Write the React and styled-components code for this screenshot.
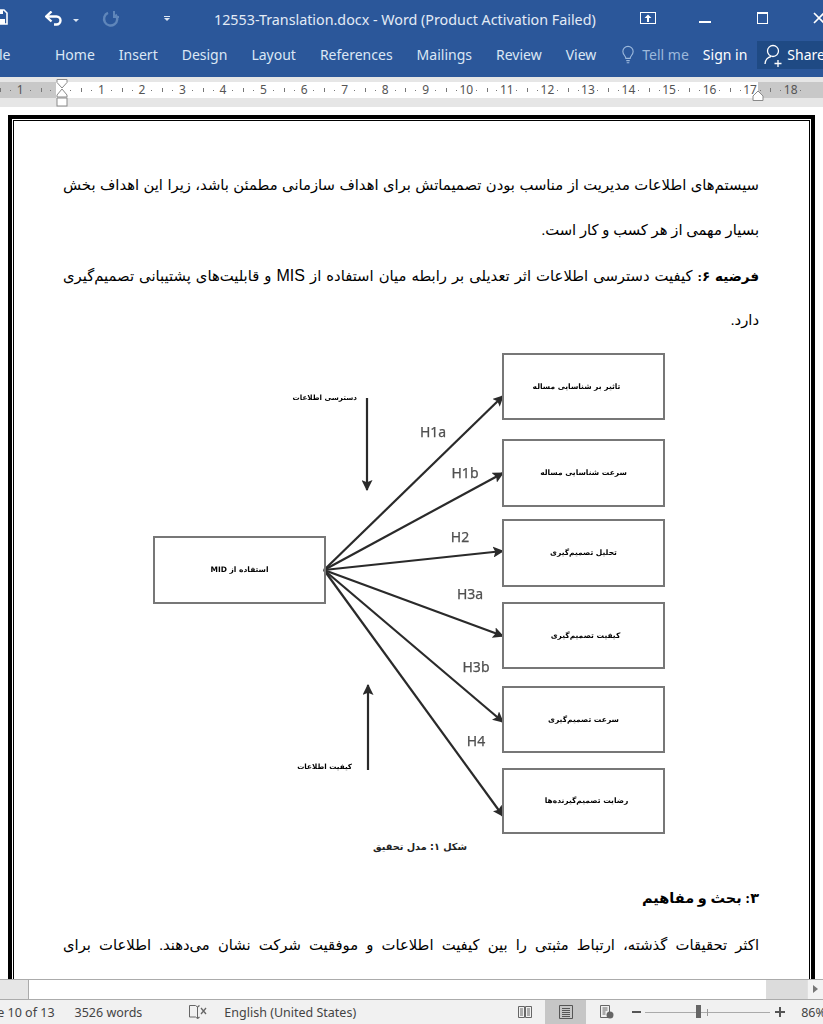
import React from 'react';
import styled, { createGlobalStyle } from 'styled-components';

const GlobalStyle = createGlobalStyle`
  html, body {
    margin: 0;
    padding: 0;
    height: 100%;
    background: #fff;
  }
  body {
    font-family: "Noto Sans", "Open Sans", sans-serif;
  }
`

const tabs = ['Home', 'Insert', 'Design', 'Layout', 'References', 'Mailings', 'Review', 'View'];
const rulerMarks = [1, '', 1, 2, 3, 4, 5, 6, 7, 8, 9, 10, 11, 12, 13, 14, 15, 16, 17, 18];

const targets = [
  { label: 'تاثیر بر شناسایی مساله', y: 10, h: 67, shift: -7, end: [353, 53], hyp: 'H1a', hx: 283, hy: 89 },
  { label: 'سرعت شناسایی مساله', y: 96, h: 68, shift: 0, end: [353, 130], hyp: 'H1b', hx: 315, hy: 130 },
  { label: 'تحلیل تصمیم‌گیری', y: 176, h: 68, shift: 0, end: [353, 208], hyp: 'H2', hx: 310, hy: 194 },
  { label: 'کیفیت تصمیم‌گیری', y: 259, h: 67, shift: 2, end: [353, 293], hyp: 'H3a', hx: 320, hy: 251 },
  { label: 'سرعت تصمیم‌گیری', y: 343, h: 67, shift: 0, end: [353, 379], hyp: 'H3b', hx: 326, hy: 324 },
  { label: 'رضایت تصمیم‌گیرنده‌ها', y: 425, h: 66, shift: 3, end: [353, 473], hyp: 'H4', hx: 326, hy: 398 },
];

function App() {
  return (
    <Screen>
      <GlobalStyle />
      <TitleBar>
        <SaveIcon viewBox="0 0 8 16">
          <path d="M-8 1h12l3 3v11H-8z" fill="none" stroke="#fff" strokeWidth="1.600" />
          <path d="M0 1h3v4H0zM0 10h5v5H0z" fill="#fff" />
        </SaveIcon>
        <UndoIcon viewBox="0 0 18 16">
          <path d="M2 5.500h9.500a4 4 0 0 1 0 8H9" fill="none" stroke="#fff" strokeWidth="2.400" />
          <path d="M6.500 0.500 1.200 5.500l5.300 5" fill="none" stroke="#fff" strokeWidth="2.400" />
        </UndoIcon>
        <Caret $left={10} />
        <RedoIcon viewBox="0 0 18 18">
          <path d="M13.500 4.500a6.600 6.600 0 1 1-7.500-1.600" fill="none" stroke="#5f86ba" strokeWidth="2.400" />
          <path d="M12 1v6h5" fill="none" stroke="#5f86ba" strokeWidth="2" />
        </RedoIcon>
        <Customize>
          <span />
          <Caret $left={0} />
        </Customize>
        <DocTitle>12553-Translation.docx - Word (Product Activation Failed)</DocTitle>
        <RestoreIcon viewBox="0 0 16 12">
          <rect x="0.500" y="0.500" width="15" height="11" fill="none" stroke="#fff" />
          <path d="M8 2.500 4.500 6H7v4h2V6h2.500z" fill="#fff" />
        </RestoreIcon>
        <MinimizeIcon />
        <MaximizeIcon />
        <CloseIcon viewBox="0 0 12 12">
          <path d="M1 1l10 10M11 1 1 11" stroke="#fff" strokeWidth="1.600" />
        </CloseIcon>
      </TitleBar>

      <Ribbon>
        <FileTab>File</FileTab>
        <Tabs>
          {tabs.map(tab => <Tab key={tab}>{tab}</Tab>)}
        </Tabs>
        <BulbIcon viewBox="0 0 14 20">
          <path d="M4.500 14c0-3-3.500-4-3.500-8a6 6 0 0 1 12 0c0 4-3.500 5-3.500 8z" fill="none" stroke="#9db9dc" strokeWidth="1.300" />
          <path d="M5 16.500h4M5.500 19h3" stroke="#9db9dc" strokeWidth="1.300" />
        </BulbIcon>
        <TellMe>Tell me</TellMe>
        <SignIn>Sign in</SignIn>
        <ShareBox>
          <svg width="20" height="24" viewBox="0 0 20 24">
            <circle cx="9" cy="8" r="5.500" fill="none" stroke="#fff" strokeWidth="1.300" />
            <path d="M1 21c0-4 3-7 6-7.500M14 17v7M10.500 20.500h7" fill="none" stroke="#fff" strokeWidth="1.300" />
          </svg>
          <span>Share</span>
        </ShareBox>
      </Ribbon>

      <RulerBand>
        <Ruler>
          {rulerMarks.map((mark, i) => <RulerCell key={i}>{mark}</RulerCell>)}
          <IndentMarker viewBox="0 0 12 29">
            <path d="M1 .5h10v3L6 9 1 3.500zM6 10l5 6v2H1v-2z" fill="#fff" stroke="#8a8a8a" />
            <rect x="1" y="19" width="10" height="8" fill="#fff" stroke="#8a8a8a" />
          </IndentMarker>
          <RightMarker viewBox="0 0 12 11">
            <path d="M1 10.500V6l5-5 5 5v4.500z" fill="#fff" stroke="#8a8a8a" />
          </RightMarker>
        </Ruler>
      </RulerBand>

      <Workspace>
        <Page>
          <PageInner>
            <Line>سیستم‌های اطلاعات مدیریت از مناسب بودن تصمیماتش برای اهداف سازمانی مطمئن باشد، زیرا این اهداف بخش</Line>
            <Line $short>بسیار مهمی از هر کسب و کار است.</Line>
            <Line><Lead>فرضیه ۶:</Lead> کیفیت دسترسی اطلاعات اثر تعدیلی بر رابطه میان استفاده از <Latin>MIS</Latin> و قابلیت‌های پشتیبانی تصمیم‌گیری</Line>
            <Line $short>دارد.</Line>

            <Diagram>
              <Wires viewBox="0 0 520 495">
                <defs>
                  <marker id="head" markerWidth="5" markerHeight="5" refX="4.500" refY="2.500" orient="auto">
                    <path d="M0 0 5 2.500 0 5 1 2.500z" fill="#2a2a2a" />
                  </marker>
                </defs>
                {targets.map(t => (
                  <line key={t.hyp} x1="174" y1="227" x2={t.end[0]} y2={t.end[1]} stroke="#2a2a2a" strokeWidth="2.200" markerEnd="url(#head)" />
                ))}
                <line x1="217" y1="55" x2="217" y2="147" stroke="#2a2a2a" strokeWidth="2.200" markerEnd="url(#head)" />
                <line x1="218" y1="427" x2="218" y2="342" stroke="#2a2a2a" strokeWidth="2.200" markerEnd="url(#head)" />
              </Wires>
              <Node $x={3} $y={193} $w={173} $h={68}>
                <NodeLabel dir="rtl" $shift={0}>استفاده از MID</NodeLabel>
              </Node>
              {targets.map(t => (
                <Node key={t.label} $x={352} $y={t.y} $w={163} $h={t.h}>
                  <NodeLabel dir="rtl" $shift={t.shift}>{t.label}</NodeLabel>
                </Node>
              ))}
              {targets.map(t => (
                <Hypothesis key={t.hyp} $x={t.hx} $y={t.hy}>{t.hyp}</Hypothesis>
              ))}
              <SideLabel dir="rtl" $x={207} $y={55}>دسترسی اطلاعات</SideLabel>
              <SideLabel dir="rtl" $x={202} $y={424}>کیفیت اطلاعات</SideLabel>
            </Diagram>

            <Caption>شکل ۱: مدل تحقیق</Caption>
            <Heading>۳: بحث و مفاهیم</Heading>
            <Line>اکثر تحقیقات گذشته، ارتباط مثبتی را بین کیفیت اطلاعات و موفقیت شرکت نشان می‌دهند. اطلاعات برای</Line>
          </PageInner>
        </Page>
      </Workspace>

      <HScroll>
        <ScrollThumb />
        <ScrollTrack />
        <ScrollArrow />
      </HScroll>

      <StatusBar>
        <StatusText $left={-25}>Page 10 of 13</StatusText>
        <StatusText $left={20}>3526 words</StatusText>
        <ProofIcon viewBox="0 0 18 14">
          <path d="M.5.500h6l2 1.500v11.500l-2-1.500h-6z" fill="none" stroke="#666" />
          <path d="M8.500 2l2-1.500M8.500 13.500l2-1.500M12 3l5 6M17 3l-5 6" fill="none" stroke="#666" strokeWidth="1.300" />
        </ProofIcon>
        <StatusText $left={17}>English (United States)</StatusText>
        <StatusIcons>
          <ViewButton>
            <svg width="14" height="14" viewBox="0 0 14 14">
              <path d="M.5 1.500h6v11h-6zM7.500 1.500h6v11h-6zM2 4h3M2 6h3M2 8h3M2 10h3M9 4h3M9 6h3M9 8h3M9 10h3" fill="none" stroke="#666" />
            </svg>
          </ViewButton>
          <ViewButton $active>
            <svg width="14" height="14" viewBox="0 0 14 14">
              <path d="M.5.500h13v13H.5zM3 3.500h8M3 5.500h8M3 7.500h8M3 9.500h8M3 11.500h8" fill="none" stroke="#555" />
            </svg>
          </ViewButton>
          <ViewButton>
            <svg width="14" height="14" viewBox="0 0 14 14">
              <path d="M.5.500h9v12h-9zM2.500 3h5M2.500 5h5M2.500 7h3M2.500 9h3" fill="none" stroke="#666" />
              <circle cx="10" cy="10" r="3.500" fill="#666" />
            </svg>
          </ViewButton>
        </StatusIcons>
        <ZoomMinus />
        <ZoomSlider>
          <ZoomThumb />
          <ZoomTick />
        </ZoomSlider>
        <ZoomPlus />
        <ZoomValue>86%</ZoomValue>
      </StatusBar>
    </Screen>
  );
}

const Screen = styled.div`
  width: 823px;
  height: 1024px;
  overflow: hidden;
  display: flex;
  flex-direction: column;
`

const TitleBar = styled.div`
  height: 41px;
  flex: none;
  background: #2b579a;
  display: flex;
  align-items: center;
  position: relative;
`

const SaveIcon = styled.svg`
  width: 8px;
  height: 16px;
  flex: none;
  margin-top: -8px;
`

const UndoIcon = styled.svg`
  width: 18px;
  height: 16px;
  flex: none;
  margin-left: 37px;
  margin-top: -3px;
`

const Caret = styled.span`
  display: block;
  flex: none;
  width: 0;
  height: 0;
  margin-left: ${p => p.$left}px;
  border-left: 3px solid transparent;
  border-right: 3px solid transparent;
  border-top: 3px solid #dce6f3;
`

const RedoIcon = styled.svg`
  width: 18px;
  height: 18px;
  flex: none;
  margin-left: 23px;
  margin-top: -4px;
`

const Customize = styled.div`
  flex: none;
  width: 6px;
  margin-left: 44px;
  margin-top: -5px;
  display: flex;
  flex-direction: column;
  gap: 1px;

  span:first-child {
    display: block;
    width: 6px;
    height: 1px;
    background: #dce6f3;
  }
`

const DocTitle = styled.div`
  flex: none;
  margin-left: 44px;
  width: 382px;
  color: #e3ebf6;
  font-size: 14.300px;
  white-space: nowrap;
  margin-top: -2px;
`

const RestoreIcon = styled.svg`
  width: 16px;
  height: 12px;
  flex: none;
  margin-left: 44px;
  margin-top: -5px;
`

const MinimizeIcon = styled.div`
  width: 12px;
  height: 2px;
  flex: none;
  background: #fff;
  margin-left: 43px;
  margin-top: 2px;
`

const MaximizeIcon = styled.div`
  width: 9px;
  height: 9px;
  flex: none;
  border: 1px solid #fff;
  border-top-width: 2px;
  margin-left: 46px;
  margin-top: -6px;
`

const CloseIcon = styled.svg`
  width: 12px;
  height: 12px;
  flex: none;
  margin-left: 45px;
  margin-top: -5px;
`

const Ribbon = styled.div`
  height: 36px;
  flex: none;
  background: #2b579a;
  display: flex;
  align-items: flex-start;
  color: #dbe7f5;
  font-size: 14px;
`

const FileTab = styled.div`
  flex: none;
  width: 42px;
  margin-left: -12px;
  margin-right: 25px;
  margin-top: 4px;
`

const Tabs = styled.div`
  display: flex;
  gap: 24px;
  flex: none;
  margin-top: 4px;
`

const Tab = styled.div`
  flex: none;
`

const BulbIcon = styled.svg`
  width: 12px;
  height: 20px;
  flex: none;
  margin-left: 26px;
  margin-top: 4px;
`

const TellMe = styled.div`
  flex: none;
  margin-left: 8px;
  margin-top: 4px;
  color: #9db9dc;
`

const SignIn = styled.div`
  flex: none;
  margin-left: 14px;
  margin-top: 4px;
  color: #fff;
`

const ShareBox = styled.div`
  flex: none;
  margin-left: 10px;
  width: 90px;
  height: 29px;
  margin-top: -1px;
  padding-left: 7px;
  background: #1f4a84;
  color: #fff;
  display: flex;
  align-items: center;
  gap: 3px;
  box-sizing: border-box;
`

const RulerBand = styled.div`
  height: 30px;
  flex: none;
  background: #e6e6e6;
  padding-top: 5px;
  box-sizing: border-box;
`

const Ruler = styled.div`
  height: 16px;
  display: flex;
  position: relative;
  background: linear-gradient(to right, #c8c8c8 0 56px, #fff 56px 758px, #c8c8c8 758px);
`

const RulerCell = styled.div`
  flex: none;
  width: 40.55px;
  text-align: center;
  font-size: 12px;
  line-height: 16px;
  color: #555;
  background-image:
    linear-gradient(#777, #777),
    linear-gradient(#777, #777),
    linear-gradient(#777, #777);
  background-repeat: no-repeat;
  background-size: 1px 4px, 1px 1px, 1px 1px;
  background-position: 0 6px, 25% 8px, 75% 8px;
`

const IndentMarker = styled.svg`
  position: absolute;
  left: 56px;
  top: -3px;
  width: 12px;
  height: 29px;
`

const RightMarker = styled.svg`
  position: absolute;
  left: 752px;
  top: 8px;
  width: 12px;
  height: 11px;
`

const Workspace = styled.div`
  flex: 1;
  min-height: 0;
  overflow: hidden;
  background: #fff;
  padding: 8px 8px 0;
`

const Page = styled.div`
  width: 807px;
  box-sizing: border-box;
  border: 4px solid #000;
  background: #fff;
  padding: 1px;
`

const PageInner = styled.div`
  border: 1px solid #000;
  padding: 42px 50px 60px 49px;
  direction: rtl;
  font-family: "Liberation Serif", "DejaVu Sans", serif;
  color: #000;
`

const Line = styled.div`
  height: 45px;
  line-height: 45px;
  font-size: 14.800px;
  white-space: nowrap;
  text-align: ${p => (p.$short ? 'right' : 'justify')};
  text-align-last: ${p => (p.$short ? 'right' : 'justify')};
`

const Lead = styled.b`
  font-size: 13.500px;
`

const Latin = styled.span`
  font-family: "Liberation Sans", sans-serif;
  font-size: 16px;
`

const Diagram = styled.div`
  direction: ltr;
  position: relative;
  width: 520px;
  height: 495px;
  margin-right: 89px;
  font-family: "DejaVu Sans", sans-serif;
  filter: blur(0.35px);
`

const Wires = styled.svg`
  position: absolute;
  left: 0;
  top: 0;
  width: 520px;
  height: 495px;
`

const Node = styled.div`
  position: absolute;
  left: ${p => p.$x}px;
  top: ${p => p.$y}px;
  width: ${p => p.$w}px;
  height: ${p => p.$h}px;
  box-sizing: border-box;
  border: 2px solid #777;
  display: flex;
  align-items: center;
  justify-content: center;
`

const NodeLabel = styled.span`
  font-size: 7.500px;
  font-weight: bold;
  color: #000;
  white-space: nowrap;
  margin-top: -1px;
  margin-left: ${p => p.$shift * 2}px;
`

const Hypothesis = styled.div`
  position: absolute;
  left: ${p => p.$x}px;
  top: ${p => p.$y - 10}px;
  transform: translateX(-50%);
  font-family: "Noto Sans", sans-serif;
  font-size: 14px;
  line-height: 20px;
  color: #505050;
  -webkit-text-stroke: 0.25px #505050;
`

const SideLabel = styled.div`
  position: absolute;
  right: calc(100% - ${p => p.$x}px);
  top: ${p => p.$y - 8}px;
  font-size: 7.200px;
  font-weight: bold;
  line-height: 16px;
  color: #000;
  white-space: nowrap;
`

const Caption = styled.div`
  height: 18px;
  line-height: 18px;
  font-family: "DejaVu Sans", sans-serif;
  font-size: 9.700px;
  font-weight: bold;
  text-align: center;
  color: #222;
  width: 92px;
  margin-inline-start: 292px;
  white-space: nowrap;
`

const Heading = styled.div`
  height: 24px;
  line-height: 24px;
  margin-top: 30px;
  margin-bottom: 13px;
  font-size: 14.500px;
  font-weight: bold;
`

const HScroll = styled.div`
  height: 21px;
  flex: none;
  display: flex;
  background: #e6e6e6;
  box-sizing: border-box;
  border-top: 1px solid #ababab;
  border-bottom: 1px solid #ababab;
  padding-left: 28px;
`

const ScrollThumb = styled.div`
  width: 739px;
  flex: none;
  box-sizing: border-box;
  background: #fff;
  border-left: 1px solid #ababab;
  border-right: 1px solid #ddd;
`

const ScrollTrack = styled.div`
  width: 40px;
  flex: none;
  background: #dcdcdc;
`

const ScrollArrow = styled.div`
  flex: 1;
  background: #f3f3f3;
  border-left: 1px solid #e0e0e0;
  position: relative;

  &::after {
    content: '';
    position: absolute;
    left: 5px;
    top: 5px;
    border-top: 4px solid transparent;
    border-bottom: 4px solid transparent;
    border-left: 5px solid #777;
  }
`

const StatusBar = styled.div`
  flex: none;
  height: 24px;
  display: flex;
  align-items: center;
  background: #f1f1f1;
  color: #444;
  font-size: 12.500px;
`

const StatusText = styled.div`
  flex: none;
  margin-left: ${p => p.$left}px;
  white-space: nowrap;
`

const ProofIcon = styled.svg`
  width: 18px;
  height: 14px;
  flex: none;
  margin-left: 47px;
`

const StatusIcons = styled.div`
  display: flex;
  height: 100%;
  flex: none;
  margin-left: 148px;
`

const ViewButton = styled.div`
  width: 41px;
  height: 100%;
  display: flex;
  align-items: center;
  justify-content: center;
  background: ${p => (p.$active ? '#c6c6c6' : 'transparent')};
`

const ZoomMinus = styled.div`
  width: 9px;
  height: 2px;
  flex: none;
  margin-left: 5px;
  background: #555;
`

const ZoomSlider = styled.div`
  width: 125px;
  height: 1px;
  flex: none;
  margin-left: 4px;
  background: #aaa;
  position: relative;
`

const ZoomThumb = styled.div`
  position: absolute;
  left: 51px;
  top: -7px;
  width: 5px;
  height: 13px;
  background: #666;
`

const ZoomTick = styled.div`
  position: absolute;
  left: 62px;
  top: -3px;
  width: 1px;
  height: 7px;
  background: #999;
`

const ZoomPlus = styled.div`
  width: 10px;
  height: 10px;
  flex: none;
  margin-left: 5px;
  background:
    linear-gradient(#555, #555) center / 10px 2px no-repeat,
    linear-gradient(#555, #555) center / 2px 10px no-repeat;
`

const ZoomValue = styled.div`
  flex: none;
  margin-left: 16px;
  white-space: nowrap;
`

export default App;
